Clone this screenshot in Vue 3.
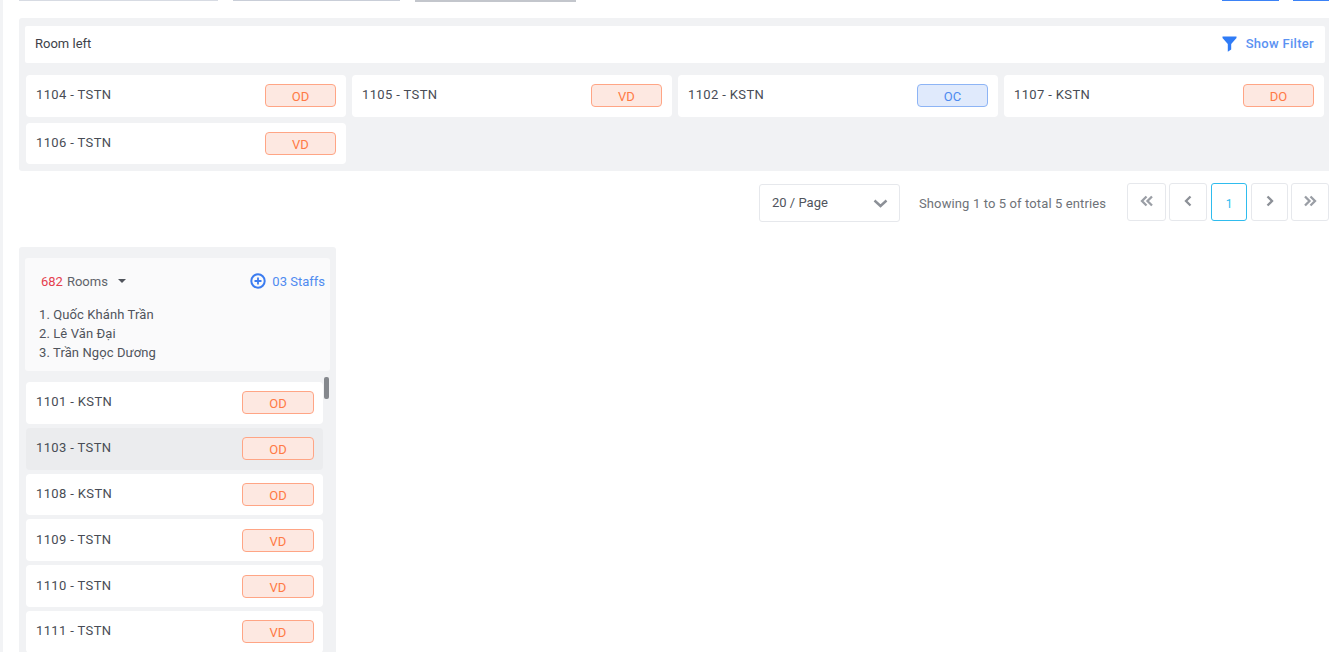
<script setup>
const leftRooms = [
  { name: '1104 - TSTN', status: 'OD' },
  { name: '1105 - TSTN', status: 'VD' },
  { name: '1102 - KSTN', status: 'OC' },
  { name: '1107 - KSTN', status: 'DO' },
  { name: '1106 - TSTN', status: 'VD' },
]
const assigned = [
  { name: '1101 - KSTN', status: 'OD' },
  { name: '1103 - TSTN', status: 'OD', active: true },
  { name: '1108 - KSTN', status: 'OD' },
  { name: '1109 - TSTN', status: 'VD' },
  { name: '1110 - TSTN', status: 'VD' },
  { name: '1111 - TSTN', status: 'VD' },
]
const staffs = ['Quốc Khánh Trần', 'Lê Văn Đại', 'Trần Ngọc Dương']
</script>

<template>
  <div class="page">
    <div class="toolbar">
      <span class="stub s1"></span>
      <span class="stub s2"></span>
      <span class="stub s3"></span>
      <span class="spacer"></span>
      <span class="stub b1"></span>
      <span class="stub b2"></span>
    </div>

    <section class="left-panel">
      <header class="left-head">
        <span class="left-title">Room left</span>
        <span class="filter">
          <svg width="15" height="16" viewBox="0 0 15 16"><path d="M0.5 0.5h14v1.6L9.2 8v5.5L5.8 15.8V8L0.5 2.1z" fill="#2f7bf6"/></svg>
          Show Filter
        </span>
      </header>
      <div class="left-grid">
        <div v-for="r in leftRooms" :key="r.name" class="room">
          <span class="room-name">{{ r.name }}</span>
          <span class="badge" :class="{ blue: r.status === 'OC' }">{{ r.status }}</span>
        </div>
      </div>
    </section>

    <div class="pager">
      <div class="select">
        <span class="select-label">20 / Page</span>
        <svg width="15" height="9" viewBox="0 0 15 9"><path d="M1.500 1.500l6 5.500 6-5.500" fill="none" stroke="#8c9097" stroke-width="2.400"/></svg>
      </div>
      <span class="showing">Showing 1 to 5 of total 5 entries</span>
      <div class="pages">
        <button class="pg w1"><svg width="14" height="12" viewBox="0 0 14 12"><path d="M6.500 1.500L2 6l4.500 4.500M12 1.500L7.500 6l4.500 4.500" fill="none" stroke="#9a9ea5" stroke-width="2.300"/></svg></button>
        <button class="pg w2"><svg width="8" height="12" viewBox="0 0 8 12"><path d="M6.500 1.500L2 6l4.500 4.500" fill="none" stroke="#8c9097" stroke-width="2.300"/></svg></button>
        <button class="pg w3 current">1</button>
        <button class="pg w4"><svg width="8" height="12" viewBox="0 0 8 12"><path d="M1.500 1.500L6 6l-4.500 4.500" fill="none" stroke="#8c9097" stroke-width="2.300"/></svg></button>
        <button class="pg w2"><svg width="14" height="12" viewBox="0 0 14 12"><path d="M2 1.500L6.500 6 2 10.500M7.500 1.500L12 6l-4.500 4.500" fill="none" stroke="#9a9ea5" stroke-width="2.300"/></svg></button>
      </div>
    </div>

    <section class="staff-panel">
      <div class="staff-head">
        <div class="staff-top">
          <span class="count"><b>682</b> Rooms<i class="caret"></i></span>
          <span class="add">
            <svg width="16" height="16" viewBox="0 0 16 16"><circle cx="8" cy="8" r="6.700" fill="none" stroke="#3b7cf0" stroke-width="2"/><path d="M8 4.500v7M4.500 8h7" stroke="#3b7cf0" stroke-width="1.800"/></svg>
            03 Staffs
          </span>
        </div>
        <ol class="names">
          <li v-for="(s, i) in staffs" :key="s">{{ i + 1 }}. {{ s }}</li>
        </ol>
      </div>
      <div class="list">
        <div v-for="r in assigned" :key="r.name" class="room tall" :class="{ active: r.active }">
          <span class="room-name">{{ r.name }}</span>
          <span class="badge wide">{{ r.status }}</span>
        </div>
        <span class="thumb"></span>
      </div>
    </section>
  </div>
</template>

<style>
html, body { margin: 0; background: #fff; overflow: hidden; }
</style>

<style scoped>
.page {
  box-sizing: border-box;
  width: 1329px;
  height: 652px;
  overflow: hidden;
  border-left: 3px solid #f2f3f5;
  padding-left: 16px;
  font-family: Roboto, "Noto Sans", sans-serif;
  font-size: 13px;
  color: #484c55;
}
.toolbar { display: flex; height: 1px; gap: 15px; }
.spacer { flex: 1; }
.stub { display: block; height: 1px; background: #d7dbe3; }
.s1 { width: 199px; }
.s2 { width: 167px; background: #c9ced8; }
.s3 { width: 161px; height: 2px; background: #c3c6cc; }
.b1 { width: 57px; height: 1px; background: #3b82f6; margin-right: -1px; }
.b2 { width: 36px; height: 1px; background: #3b82f6; }

.left-panel {
  margin-top: 17px;
  height: 153px;
  box-sizing: border-box;
  background: #f1f2f4;
  border-radius: 3px 0 0 3px;
  padding: 8px 4px 0 6px;
}
.left-head {
  height: 37px;
  box-sizing: border-box;
  background: #fff;
  border-radius: 2px;
  display: flex;
  align-items: center;
  justify-content: space-between;
  padding: 0 11px 2px 10px;
  margin-bottom: 12px;
}
.left-title { color: #3d4149; }
.filter {
  display: flex;
  align-items: center;
  gap: 9px;
  color: #5b92f2;
  font-weight: 500;
  letter-spacing: 0.3px;
}
.left-grid {
  display: grid;
  grid-template-columns: repeat(4, 320px);
  column-gap: 6px;
  row-gap: 6px;
  margin-left: 1px;
}
.room {
  height: 41.500px;
  box-sizing: border-box;
  background: #fff;
  border-radius: 4px;
  display: flex;
  align-items: center;
  justify-content: space-between;
  padding: 0 10px;
}
.room-name { letter-spacing: 0.36px; margin-bottom: 2px; }
.badge {
  box-sizing: border-box;
  width: 71px;
  height: 23px;
  border: 1px solid #ffa585;
  border-radius: 4px;
  background: #fde8e1;
  color: #ff7a45;
  display: flex;
  align-items: center;
  justify-content: center;
  padding-top: 2px;
}
.badge.blue { border-color: #8db4f5; background: #e0eafc; color: #4d8af0; }
.badge.wide { width: 72px; }

.pager {
  display: flex;
  align-items: center;
  height: 40px;
  margin-top: 11px;
}
.select {
  box-sizing: border-box;
  margin-left: 740px;
  width: 141px;
  height: 38px;
  margin-top: 2px;
  border: 1px solid #e6e8ec;
  border-radius: 3px;
  display: flex;
  align-items: center;
  justify-content: space-between;
  padding: 0 11px 0 12px;
  color: #50545c;
}
.select-label { margin-bottom: 2px; }
.showing {
  margin-left: 19px;
  width: 208px;
  padding-top: 2px;
  color: #6e7278;
  letter-spacing: 0.12px;
}
.pages { display: flex; gap: 3px; }
.pg {
  box-sizing: border-box;
  height: 38px;
  background: #fff;
  border: 1px solid #e6e8ec;
  border-radius: 3px;
  padding: 0;
  display: flex;
  align-items: center;
  justify-content: center;
  font: inherit;
}
.pg svg { margin-bottom: 3px; }
.w1 { width: 39px; }
.w2 { width: 38px; }
.w3 { width: 36px; margin: 0 1px; }
.w4 { width: 37px; }
.current { border: 1px solid #2fbcee; color: #2fbcee; font-size: 12px; padding-top: 3px; }

.staff-panel {
  margin-top: 25px;
  width: 317px;
  height: 420px;
  box-sizing: border-box;
  background: #f1f2f4;
  border-radius: 3px;
  padding: 11px 6px 0 6px;
}
.staff-head {
  height: 113px;
  box-sizing: border-box;
  background: #fafafb;
  border-radius: 3px;
  padding: 15px 5px 0 14px;
}
.staff-top {
  display: flex;
  justify-content: space-between;
  align-items: center;
  height: 16px;
  padding-left: 2px;
}
.count { color: #5f636a; display: flex; align-items: center; }
.count b { color: #e5404e; font-weight: 400; margin-right: 4px; }
.caret {
  width: 0;
  height: 0;
  margin-left: 10px;
  border-left: 4px solid transparent;
  border-right: 4px solid transparent;
  border-top: 4px solid #50545c;
}
.add { display: flex; align-items: center; gap: 6px; color: #4f8bf0; }
.names {
  list-style: none;
  margin: 16px 0 0;
  padding: 0;
  line-height: 19px;
  color: #50545c;
  letter-spacing: 0.1px;
}
.list {
  position: relative;
  margin-top: 11px;
  display: flex;
  flex-direction: column;
  gap: 4px;
  padding: 0 7px 0 1px;
}
.room.tall { height: 41.800px; padding-right: 9px; flex: none; }
.room.active { background: #ebecee; }
.thumb {
  position: absolute;
  right: 1px;
  top: -5px;
  width: 5px;
  height: 22px;
  border-radius: 2px;
  background: #85888d;
}
</style>
